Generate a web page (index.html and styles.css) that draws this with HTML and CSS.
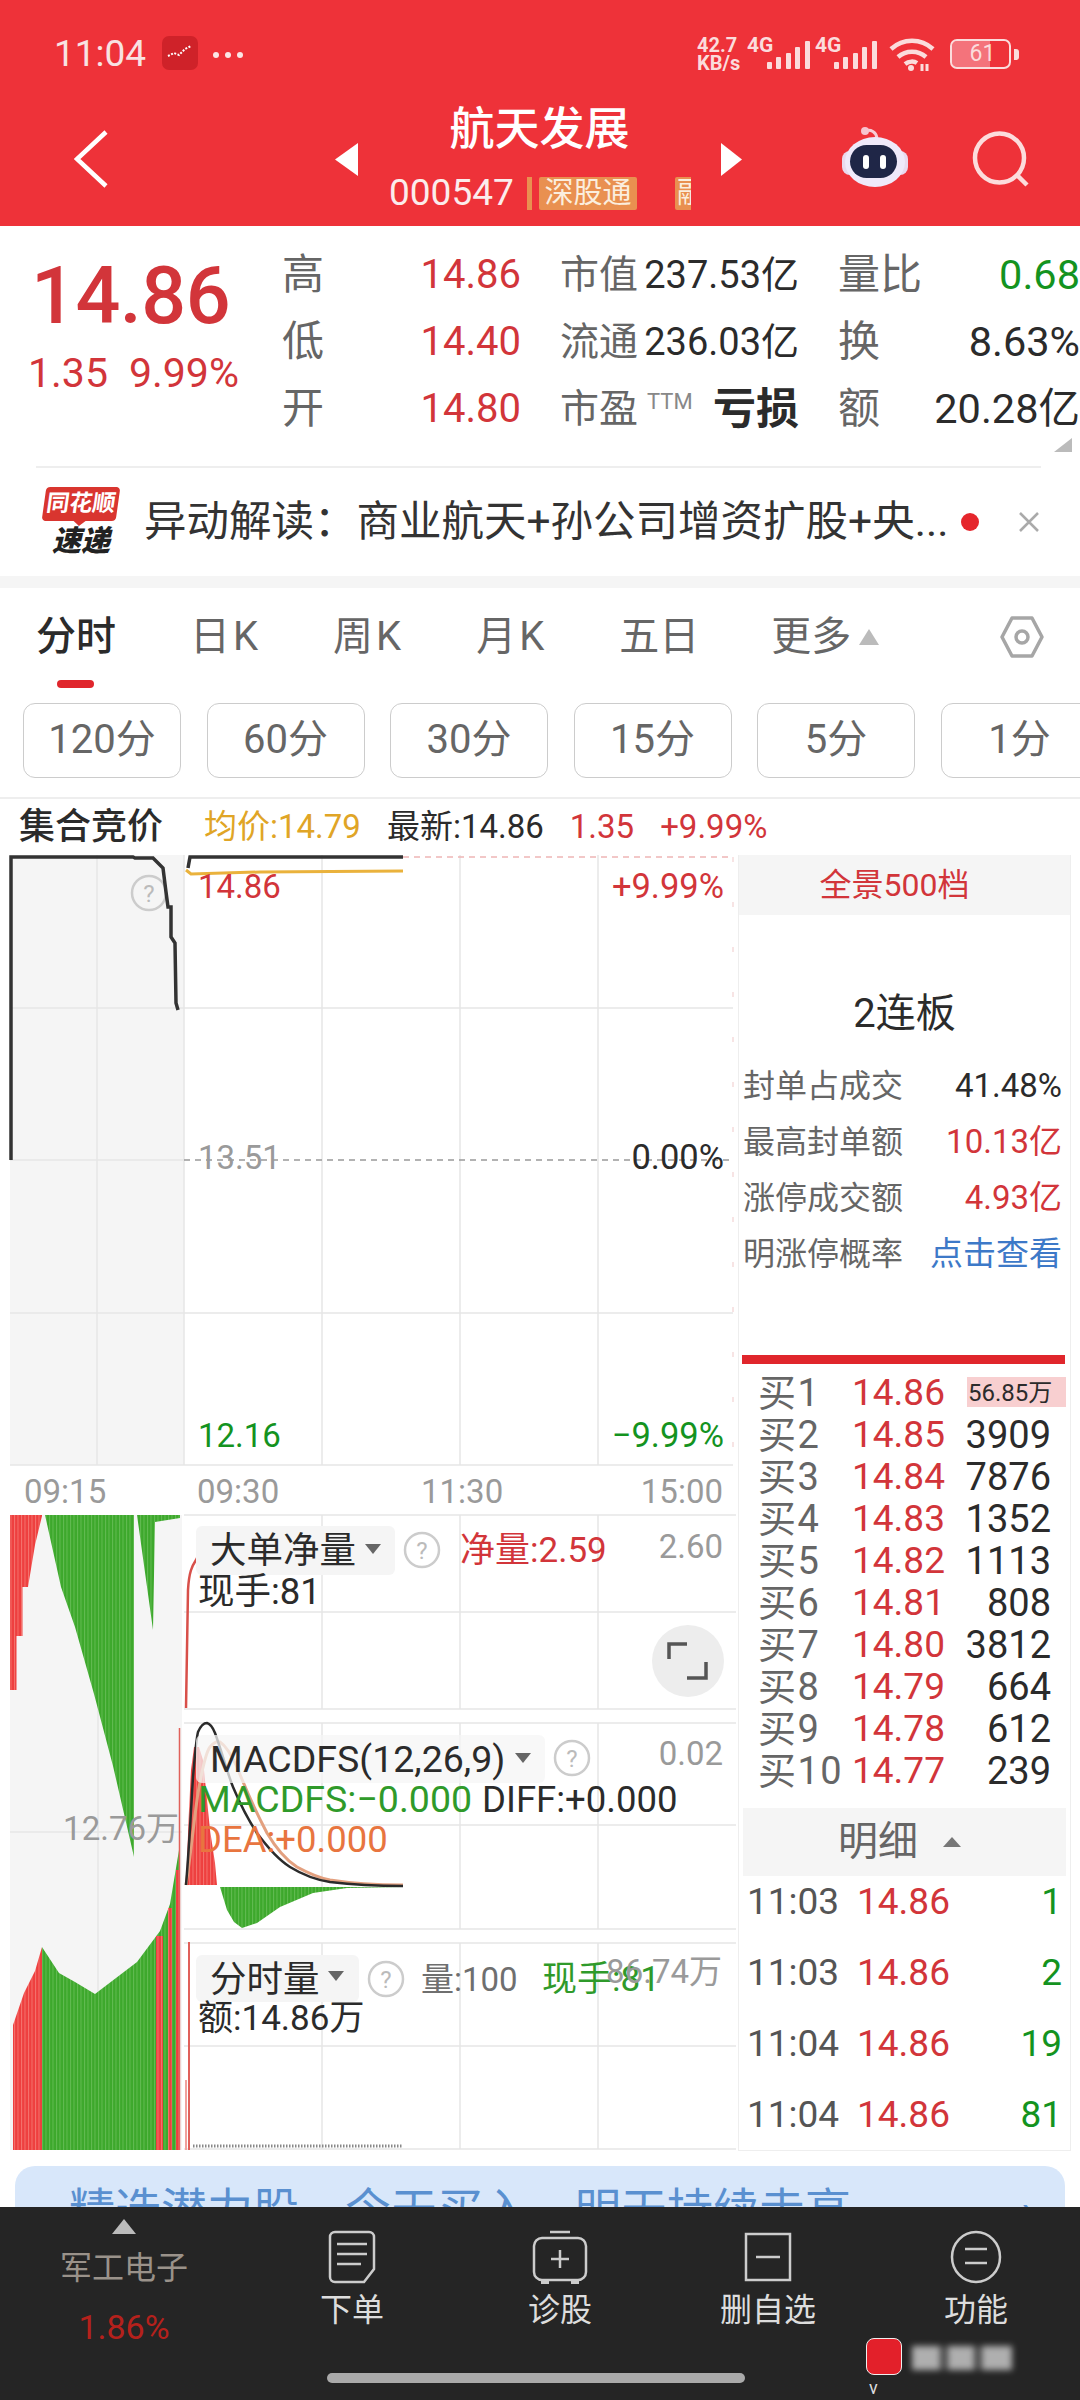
FILE: index.html
```html
<!DOCTYPE html>
<html lang="zh">
<head>
<meta charset="utf-8">
<title>航天发展</title>
<link rel="stylesheet" href="styles.css">
</head>
<body>
<div class="page">
  <header class="header">
    <div class="status">
      <span class="clock">11:04</span>
      <span class="app-dot"><svg viewBox="0 0 36 34" width="36" height="34"><path d="M6 20l6-3 5 2 6-6 6-3" fill="none" stroke="#fff" stroke-width="2" stroke-dasharray="2 1.500"/></svg></span>
      <span class="more-dots"><i></i><i></i><i></i></span>
      <span class="status-right">
        <span class="speed">42.7<br>KB/s</span>
        <svg class="sig" viewBox="0 -8 64 42" width="64" height="42"><text class="g4" x="0" y="14">4G</text><rect x="20" y="24" width="5" height="7" rx="1"/><rect x="29" y="19" width="5" height="12" rx="1"/><rect x="39" y="15" width="5" height="16" rx="1"/><rect x="48" y="9" width="5" height="22" rx="1"/><rect x="58" y="3" width="5" height="28" rx="1"/></svg>
        <svg class="sig sig2" viewBox="0 -8 63 42" width="63" height="42"><text class="g4" x="0" y="14">4G</text><rect x="19" y="24" width="5" height="7" rx="1"/><rect x="28" y="19" width="5" height="12" rx="1"/><rect x="38" y="15" width="5" height="16" rx="1"/><rect x="47" y="9" width="5" height="22" rx="1"/><rect x="57" y="3" width="5" height="28" rx="1"/></svg>
        <svg class="wifi" viewBox="0 0 46 34" width="46" height="34"><g fill="none" stroke="#fbdcdc" stroke-width="4.500"><path d="M2 12C14 1 32 1 44 12"/><path d="M9 20c8-7 20-7 28 0"/><path d="M16 27c4-3 9-3 12-1"/></g><circle cx="22" cy="31" r="3" fill="#fbdcdc"/><path d="M33 27v7M38 27v7" stroke="#fbdcdc" stroke-width="3"/></svg>
        <span class="battery"><span class="battery-body">61</span><i class="battery-cap"></i></span>
      </span>
    </div>
    <div class="nav">
      <svg class="back" viewBox="0 0 34 58" width="34" height="58"><path d="M32 2L3 29l29 27" fill="none" stroke="#fff" stroke-width="4.500"/></svg>
      <svg class="tri-l" viewBox="0 0 23 33" width="23" height="33"><path d="M23 0v33L0 16.500z" fill="#fff"/></svg>
      <div class="title-block">
        <div class="title">航天发展</div>
        <div class="code-row"><span class="code">000547</span><i class="code-sep"></i><span class="tag">深股通</span><span class="tag tag-cut">融</span></div>
      </div>
      <svg class="tri-r" viewBox="0 0 21 33" width="21" height="33"><path d="M0 0v33l21-16.500z" fill="#fff"/></svg>
      <svg class="robot" viewBox="0 0 66 64" width="66" height="64">
        <path d="M23 5c6-2 11 1 12 7" fill="none" stroke="#f7cdd6" stroke-width="3"/><circle cx="23" cy="5" r="4" fill="#f7c3cf"/>
        <rect x="0" y="25" width="66" height="24" rx="8" fill="#e9d9ee"/>
        <ellipse cx="33" cy="36" rx="30" ry="25" fill="#efe9fa"/>
        <rect x="8" y="19" width="47" height="33" rx="16.500" fill="#1f2647"/>
        <rect x="21" y="29" width="6" height="14" rx="3" fill="#fff"/><rect x="38" y="29" width="6" height="14" rx="3" fill="#fff"/>
      </svg>
      <svg class="search" viewBox="0 0 60 62" width="60" height="62"><circle cx="29.500" cy="32" r="24.500" fill="none" stroke="#fcdcdc" stroke-width="4.500"/><path d="M47 49l10 10" stroke="#fcdcdc" stroke-width="4.500" fill="none"/></svg>
    </div>
  </header>

  <section class="quote">
    <div class="quote-top">
      <div class="price">
        <div class="price-big">14.86</div>
        <div class="price-sub"><span>1.35</span><span>9.99%</span></div>
      </div>
      <div class="stats">
        <div class="stat"><span class="k">高</span><span class="v v1 red">14.86</span></div>
        <div class="stat"><span class="k k2">市值</span><span class="v dark">237.53亿</span></div>
        <div class="stat"><span class="k">量比</span><span class="v v3 green">0.68</span></div>
        <div class="stat"><span class="k">低</span><span class="v v1 red">14.40</span></div>
        <div class="stat"><span class="k k2">流通</span><span class="v dark">236.03亿</span></div>
        <div class="stat"><span class="k">换</span><span class="v v3 dark">8.63%</span></div>
        <div class="stat"><span class="k">开</span><span class="v v1 red">14.80</span></div>
        <div class="stat"><span class="k k2">市盈<small class="ttm">TTM</small></span><span class="v v4 dark">亏损</span></div>
        <div class="stat"><span class="k">额</span><span class="v v3 dark">20.28亿</span></div>
      </div>
      <i class="corner"></i>
    </div>
    <div class="news">
      <div class="logo"><span class="logo-top"><span class="logo-word">同花顺</span></span><span class="logo-bot">速递</span></div>
      <div class="news-text">异动解读：商业航天+孙公司增资扩股+央...</div>
      <i class="news-dot"></i>
      <svg class="news-x" viewBox="0 0 22 22" width="22" height="22"><path d="M2 2l18 18M20 2L2 20" stroke="#aaa" stroke-width="2.500"/></svg>
    </div>
  </section>
  <div class="strip"></div>

  <nav class="tabs">
    <span class="tab active">分时</span>
    <span class="tab tab-k">日K</span>
    <span class="tab tab-k">周K</span>
    <span class="tab tab-k">月K</span>
    <span class="tab">五日</span>
    <span class="tab tab-more">更多<i class="up"></i></span>
    <svg class="hex" viewBox="0 0 44 44" width="44" height="44"><path d="M12 3h20l10 19-10 19H12L2 22z" fill="none" stroke="#a6a6a6" stroke-width="3.500" stroke-linejoin="round"/><circle cx="22" cy="22" r="6" fill="none" stroke="#a6a6a6" stroke-width="3.500"/></svg>
  </nav>
  <div class="chips">
    <span class="chip">120分</span><span class="chip">60分</span><span class="chip">30分</span><span class="chip">15分</span><span class="chip">5分</span><span class="chip">1分</span>
  </div>
  <div class="info">
    <b class="info-title">集合竞价</b>
    <span class="gold">均价:14.79</span>
    <span class="dark">最新:14.86</span>
    <span class="red">1.35</span>
    <span class="red">+9.99%</span>
  </div>

  <main class="body">
    <div class="chart-col">
      <svg class="chart" viewBox="0 855 738 1300" width="738" height="1300">
        <defs>
          <pattern id="gs" patternUnits="userSpaceOnUse" width="3.500" height="8"><rect width="3.500" height="8" fill="#3da82c"/><rect width="1" height="8" fill="#62bb52"/></pattern>
          <pattern id="rs" patternUnits="userSpaceOnUse" width="3.500" height="8"><rect width="3.500" height="8" fill="#ee3f3f"/><rect width="1" height="8" fill="#f4736e"/></pattern>
        </defs>
        <!-- main pane -->
        <rect x="10" y="855" width="174" height="610" fill="#f5f5f5"/>
        <g class="grid">
          <path d="M10 1008H733M10 1313H733M10 1465H733M97 855V1465M184 855V1465M322 855V1465M460 855V1465M598 855V1465"/>
          <path d="M10 1160H184"/>
        </g>
        <path class="dash-gray" d="M184 1160H733"/>
        <path class="dash-red" d="M403 857H733"/>
        <path class="dash-faint" d="M733 857V1465"/>
        <circle class="help" cx="149" cy="893" r="17"/><text class="help-t" x="149" y="894">?</text>
        <path class="line-black" d="M11 1160V857H133L135 858H153L163 868 166 892 168 907 171 907 171 937 175 943 176 1003 178 1010"/>
        <path class="line-black" d="M188 868L190 857H403"/>
        <path class="line-gold" d="M186 870L191 874 260 872 403 871"/>
        <text class="t33 red" x="198" y="886">14.86</text>
        <text class="t34 red end" x="724" y="886">+9.99%</text>
        <text class="t33 gray" x="198" y="1157">13.51</text>
        <text class="t34 dark end" x="724" y="1157">0.00%</text>
        <text class="t33 green" x="198" y="1435">12.16</text>
        <text class="t34 green end" x="724" y="1435">−9.99%</text>
        <!-- time axis -->
        <text class="t33 gray" x="24" y="1491">09:15</text>
        <text class="t33 gray" x="197" y="1491">09:30</text>
        <text class="t33 gray" x="421" y="1491">11:30</text>
        <text class="t33 gray end" x="723" y="1491">15:00</text>
        <!-- left auction bars -->
        <rect x="10" y="1515" width="172" height="635" fill="#f5f5f5"/>
        <path class="grid" d="M10 1832H182M98 1515V2150"/>
        <path fill="url(#rs)" d="M10 1515V1690H16.500V1636H22.500V1587H28L35 1545 42 1516V1515z"/>
        <path fill="url(#gs)" d="M45 1515L61 1587 75 1627 94 1694 113 1766 134 1857V1515z"/>
        <path fill="url(#gs)" d="M137 1515L153 1630 155 1522 180 1518V1515z"/>
        <path fill="url(#rs)" d="M13 2150V2025L24 1993 35 1971 42 1947V2150z"/>
        <path fill="url(#gs)" d="M42 2150V1947L59 1973 75 1982 95 1994 137 1962 160 1931 170 1904 179 1850V2150z"/>
        <path fill="url(#rs)" d="M156 2150V1936H163V2150zM168 2150V1908H172V2150zM176 2150V1870H179V2150z"/>
        <path d="M179.500 1728V2150" stroke="#e0605a" stroke-width="1.500"/>
        <text class="t33 gray end" x="179" y="1828">12.76万</text>
        <!-- panels -->
        <g class="grid">
          <path d="M184 1515H736M184 1612H736M184 1709H736M322 1515V1709M460 1515V1709M598 1515V1709"/>
          <path d="M184 1723H736M184 1825H736M184 1929H736M322 1723V1929M460 1723V1929M598 1723V1929"/>
          <path d="M184 1943H736M184 2046H736M184 2149H736M322 1943V2149M460 1943V2149M598 1943V2149"/>
        </g>
        <!-- net volume -->
        <path class="line-red" d="M186 1708L188 1590C189 1572 192 1566 196 1560 202 1548 206 1540 216 1537 236 1534H260L274 1527H290L311 1522H340L349 1516H403"/>
        <rect class="chipbg" x="196" y="1526" width="199" height="49" rx="6"/>
        <text class="t36 dark" x="210" y="1550">大单净量</text>
        <path class="caret" d="M365 1544h16l-8 10z"/>
        <circle class="help" cx="422" cy="1550" r="17"/><text class="help-t" x="422" y="1551">?</text>
        <text class="t35 red" x="460" y="1550">净量:2.59</text>
        <text class="t33 gray end" x="723" y="1546">2.60</text>
        <text class="t36 dark" x="198" y="1591">现手:81</text>
        <circle cx="688" cy="1661" r="36" fill="#ededed"/>
        <path d="M687 1644H669V1659M687 1678H706V1662" fill="none" stroke="#555" stroke-width="3.500"/>
        <!-- macd -->
        <path fill="url(#rs)" d="M186 1885L189 1810 191 1770 194 1747 199 1747 203 1760 207 1800 210 1830 215 1863 217 1885z"/>
        <path fill="url(#gs)" d="M220 1887L227 1910 234 1922 242 1928 257 1923 280 1907 313 1893 347 1888 403 1887z"/>
        <path class="line-orange" d="M186 1885C190 1860 194 1820 198 1793 202 1770 206 1752 210 1747 214 1742 217 1741 220 1742 226 1746 232 1756 237 1767 246 1790 256 1812 267 1833 277 1850 286 1860 297 1867 308 1873 320 1878 330 1880 355 1884 380 1885 403 1885"/>
        <path class="line-black2" d="M186 1885C189 1850 191 1810 193 1777 195 1755 196 1740 198 1732 201 1725 204 1723 207 1723 211 1724 213 1728 215 1733 222 1752 227 1772 233 1787 241 1806 249 1821 257 1833 268 1848 279 1860 290 1867 303 1875 317 1880 330 1882 355 1885 380 1886 403 1886"/>
        <rect class="chipbg alpha" x="196" y="1735" width="349" height="48" rx="6"/>
        <text class="t37 dark" x="210" y="1759">MACDFS(12,26,9)</text>
        <path class="caret" d="M515 1753h16l-8 10z"/>
        <circle class="help" cx="572" cy="1758" r="17"/><text class="help-t" x="572" y="1759">?</text>
        <text class="t33 gray end" x="723" y="1753">0.02</text>
        <text class="t37 green2" x="198" y="1799">MACDFS:−0.000</text>
        <text class="t36 dark" x="482" y="1799">DIFF:+0.000</text>
        <text class="t36 orange" x="198" y="1839">DEA:+0.000</text>
        <!-- volume -->
        <path d="M189 1942V2150" stroke="#e0605a" stroke-width="2"/>
        <path d="M186 2080V2150" stroke="#f0a09c" stroke-width="2"/>
        <path d="M193 2146H403" stroke="#888" stroke-width="3" stroke-dasharray="1.500 1.500"/>
        <rect class="chipbg" x="196" y="1955" width="163" height="47" rx="6"/>
        <text class="t36 dark" x="210" y="1979">分时量</text>
        <path class="caret" d="M328 1971h16l-8 10z"/>
        <circle class="help" cx="386" cy="1979" r="17"/><text class="help-t" x="386" y="1980">?</text>
        <text class="t33 gray2" x="421" y="1979">量:100</text>
        <text class="t35 green2" x="542" y="1979">现手:81</text>
        <text class="t33 gray end" x="722" y="1971">86.74万</text>
        <text class="t35 dark" x="198" y="2018">额:14.86万</text>
      </svg>
    </div>
    <aside class="side">
      <div class="band-red">全景500档</div>
      <div class="limit">2连板</div>
      <dl class="limit-list">
        <div class="lrow"><dt>封单占成交</dt><dd class="dark">41.48%</dd></div>
        <div class="lrow"><dt>最高封单额</dt><dd class="red">10.13亿</dd></div>
        <div class="lrow"><dt>涨停成交额</dt><dd class="red">4.93亿</dd></div>
        <div class="lrow"><dt>明涨停概率</dt><dd class="blue">点击查看</dd></div>
      </dl>
      <div class="redbar"></div>
      <div class="book">
        <div class="brow"><span class="bk">买1</span><span class="red">14.86</span><span class="bq small">56.85万</span></div>
        <div class="brow"><span class="bk">买2</span><span class="red">14.85</span><span class="bq">3909</span></div>
        <div class="brow"><span class="bk">买3</span><span class="red">14.84</span><span class="bq">7876</span></div>
        <div class="brow"><span class="bk">买4</span><span class="red">14.83</span><span class="bq">1352</span></div>
        <div class="brow"><span class="bk">买5</span><span class="red">14.82</span><span class="bq">1113</span></div>
        <div class="brow"><span class="bk">买6</span><span class="red">14.81</span><span class="bq">808</span></div>
        <div class="brow"><span class="bk">买7</span><span class="red">14.80</span><span class="bq">3812</span></div>
        <div class="brow"><span class="bk">买8</span><span class="red">14.79</span><span class="bq">664</span></div>
        <div class="brow"><span class="bk">买9</span><span class="red">14.78</span><span class="bq">612</span></div>
        <div class="brow"><span class="bk">买10</span><span class="red">14.77</span><span class="bq">239</span></div>
      </div>
      <div class="band-detail">明细<i class="up up2"></i></div>
      <div class="ticks">
        <div class="trow"><span class="tt">11:03</span><span class="red">14.86</span><span class="tq">1</span></div>
        <div class="trow"><span class="tt">11:03</span><span class="red">14.86</span><span class="tq">2</span></div>
        <div class="trow"><span class="tt">11:04</span><span class="red">14.86</span><span class="tq">19</span></div>
        <div class="trow"><span class="tt">11:04</span><span class="red">14.86</span><span class="tq">81</span></div>
      </div>
    </aside>
  </main>
  <div class="promo"><span>精选潜力股，今天买入，明天持续走高</span><b>›</b></div>

  <footer class="bottom">
    <div class="b-first"><i class="b-tri"></i><span class="b-name">军工电子</span><span class="b-pct">1.86%</span></div>
    <div class="b-item">
      <svg viewBox="0 0 48 54" width="48" height="54"><path d="M7 2h34a5 5 0 0 1 5 5v32l-10 13H7a5 5 0 0 1-5-5V7a5 5 0 0 1 5-5z" fill="none" stroke="#ccc" stroke-width="2.500"/><path d="M9 14h30M9 24h30M9 34h24" stroke="#ccc" stroke-width="2.500"/></svg>
      <span>下单</span>
    </div>
    <div class="b-item">
      <svg viewBox="0 0 56 54" width="56" height="54"><path d="M18 2h20" stroke="#ccc" stroke-width="2.500"/><rect x="2" y="8" width="52" height="42" rx="8" fill="none" stroke="#ccc" stroke-width="2.500"/><path d="M28 20v18M19 29h18" stroke="#ccc" stroke-width="2.500"/><path d="M9 50h8v4H9zM39 50h8v4h-8z" fill="#ccc"/></svg>
      <span>诊股</span>
    </div>
    <div class="b-item">
      <svg viewBox="0 0 48 54" width="48" height="54"><rect x="2" y="4" width="44" height="46" fill="none" stroke="#ccc" stroke-width="2.500"/><path d="M12 27h24" stroke="#ccc" stroke-width="2.500"/></svg>
      <span>删自选</span>
    </div>
    <div class="b-item">
      <svg viewBox="0 0 52 54" width="52" height="54"><ellipse cx="26" cy="27" rx="24" ry="25" fill="none" stroke="#ccc" stroke-width="2.500"/><path d="M15 19h22M15 33h22" stroke="#ccc" stroke-width="2.500"/></svg>
      <span>功能</span>
    </div>
    <div class="home-pill"></div>
    <div class="mark"><i class="mark-icon"></i><i class="mark-blur"></i><span class="mark-v">v</span></div>
  </footer>
</div>
</body>
</html>
```

FILE: styles.css
```css
* { box-sizing: border-box; }
html, body { margin: 0; padding: 0; background: #fff; }
body { font-family: Roboto, "Noto Sans CJK SC", sans-serif; color: #333; }
i { display: block; font-style: normal; }
.page { width: 1080px; height: 2400px; overflow: hidden; display: flex; flex-direction: column; position: relative; }

.red { color: #d2353a; fill: #d2353a; }
.dark { color: #2b2b2b; fill: #2b2b2b; }
.green { color: #14931f; fill: #14931f; }
.green2 { fill: #2f9a2a; }
.gray { fill: #9a9a9a; }
.gray2 { fill: #6f6f6f; }
.orange { fill: #e8753f; }
.gold { color: #e0a526; }
.blue { color: #3d79c8; }

/* header */
.header { height: 226px; background: #ee3239; color: #fff; flex: none; }
.status { height: 100px; display: flex; align-items: flex-start; padding: 36px 0 0 54px; }
.clock { font-size: 37px; line-height: 36px; width: 108px; color: #f8e2e2; }
.app-dot { width: 36px; height: 34px; border-radius: 7px; background: #cf2229; display: block; }
.app-dot svg { display: block; }
.more-dots { display: flex; gap: 6px; margin: 16px 0 0 15px; }
.more-dots i { width: 6px; height: 6px; border-radius: 50%; background: #fbe6e6; }
.status-right { position: absolute; top: 36px; left: 697px; display: flex; align-items: flex-start; color: #fbdcdc; }
.speed { font-size: 20px; line-height: 18px; font-weight: 700; width: 50px; white-space: nowrap; }
.sig { display: block; margin-top: -6px; fill: #fbdcdc; }
.g4 { font-size: 21px; font-weight: 700; fill: #fbdcdc; font-family: Roboto, sans-serif; }
.sig2 { margin-left: 4px; }
.wifi { display: block; margin: 1px 0 0 11px; }
.battery { display: flex; align-items: center; margin: 3px 0 0 15px; }
.battery-body { width: 61px; height: 30px; border: 2.500px solid #fbdcdc; border-radius: 7px; background: linear-gradient(90deg, #f4737b 0 66%, transparent 66%); background-clip: padding-box; font-size: 23px; line-height: 25px; text-align: center; padding-left: 4px; }
.battery-cap { width: 5px; height: 11px; background: #fbdcdc; border-radius: 0 3px 3px 0; margin-left: 3px; }

.nav { display: flex; align-items: flex-start; padding-left: 74px; }
.back { flex: none; margin: 30px 227px 0 0; }
.tri-l, .tri-r { flex: none; margin-top: 43px; }
.title-block { width: 363px; flex: none; }
.title { font-size: 45px; line-height: 60px; font-weight: 500; text-align: center; }
.code-row { display: flex; align-items: center; height: 44px; margin: 11px 30px 0 31px; overflow: hidden; }
.code { font-size: 37px; line-height: 44px; width: 138px; flex: none; color: #fbecec; }
.code-sep { width: 5px; height: 33px; background: #e99050; flex: none; }
.tag { flex: none; width: 98px; height: 33px; margin-left: 7px; background: #e99050; color: #fbeede; font-size: 29px; line-height: 33px; text-align: center; border-radius: 2px; }
.tag-cut { margin-left: 38px; text-align: left; padding-left: 2px; }
.robot { flex: none; margin: 26px 0 0 100px; }
.search { flex: none; margin: 26px 0 0 62px; }

/* quote */
.quote { background: #fff; flex: none; }
.quote-top { display: flex; height: 240px; position: relative; }
.price { width: 282px; flex: none; padding: 25px 0 0 28px; }
.price-big { font-size: 79px; line-height: 90px; font-weight: 500; color: #d2353a; margin-left: 3px; letter-spacing: -.5px; }
.price-sub { display: flex; gap: 21px; font-size: 41px; line-height: 44px; margin-top: 10px; color: #d2353a; white-space: nowrap; }
.stats { flex: none; width: 798px; display: grid; grid-template-columns: 239px 239px 242px; column-gap: 39px; grid-auto-rows: 67px; padding-top: 15px; }
.stat { display: flex; justify-content: space-between; align-items: center; white-space: nowrap; }
.k { font-size: 42px; line-height: 50px; color: #666; position: relative; }
.k2 { font-size: 39px; }
.ttm { font-size: 22px; line-height: 24px; color: #888; position: absolute; left: 87px; top: 6px; }
.v { font-size: 38px; line-height: 50px; }
.v1 { font-size: 40px; }
.v3 { font-size: 41.500px; }
.v4 { font-size: 43px; font-weight: 700; }
.corner { position: absolute; right: 8px; top: 212px; width: 0; height: 0; border-left: 18px solid transparent; border-bottom: 14px solid #bbb; }

.news { height: 110px; margin: 0 39px 0 36px; border-top: 2px solid #eee; display: flex; align-items: center; position: relative; }
.logo { width: 82px; flex: none; margin-left: 4px; display: flex; flex-direction: column; align-items: center; }
.logo-top { width: 74px; height: 34px; background: #d9352f; border-radius: 4px; transform: skewX(-8deg); position: relative; display: block; text-align: center; }
.logo-top::after { content: ""; position: absolute; left: 32px; top: 34px; width: 0; height: 0; border-left: 6px solid transparent; border-right: 6px solid transparent; border-top: 5px solid #d9352f; }
.logo-word { color: #fff; font-size: 23px; line-height: 34px; font-weight: 700; }
.logo-bot { font-size: 29px; line-height: 32px; font-weight: 900; font-style: italic; color: #222; margin-top: 4px; }
.news-text { font-size: 42.500px; line-height: 50px; color: #333; margin-left: 22px; width: 804px; white-space: nowrap; flex: none; }
.news-dot { width: 18px; height: 18px; border-radius: 50%; background: #e5262c; margin-left: 13px; flex: none; }
.news-x { flex: none; margin-left: 39px; }
.strip { height: 12px; background: #f5f5f5; flex: none; }

/* tabs */
.tabs { height: 115px; flex: none; display: flex; align-items: flex-start; padding: 26px 0 0 36px; gap: 72px; position: relative; }
.tab { font-size: 40px; line-height: 46px; color: #666; position: relative; white-space: nowrap; }
.tab-k { letter-spacing: 3px; }
.tab.active { color: #2b2b2b; font-weight: 500; margin-right: 2px; }
.tab.active::after { content: ""; position: absolute; left: 21px; top: 66px; width: 37px; height: 8px; border-radius: 4px; background: #e0262c; }
.tab-more { display: flex; align-items: center; gap: 8px; }
.up { width: 0; height: 0; border-left: 10px solid transparent; border-right: 10px solid transparent; border-bottom: 16px solid #bbb; }
.hex { position: absolute; left: 1000px; top: 27px; }

.chips { height: 94px; flex: none; display: flex; gap: 25.500px; padding-left: 23px; white-space: nowrap; }
.chip { flex: none; width: 158px; height: 75px; border: 1.500px solid #ccc; border-radius: 12px; font-size: 40px; line-height: 72px; text-align: center; color: #666; }

.info { height: 58px; flex: none; border-top: 2px solid #eee; display: flex; align-items: center; padding-left: 19px; gap: 26px; font-size: 33px; line-height: 44px; white-space: nowrap; }
.info-title { font-size: 36px; font-weight: 500; color: #2b2b2b; margin-right: 15px; }

/* chart */
.body { display: flex; flex: none; height: 1298px; }
.chart-col { width: 738px; flex: none; }
.chart { display: block; }
.chart text { dominant-baseline: central; }
.grid, .grid path { stroke: #e6e6e6; stroke-width: 1.500; fill: none; }
.dash-gray { stroke: #999; stroke-width: 1.500; stroke-dasharray: 6 5; fill: none; }
.dash-red { stroke: #eeb5b5; stroke-width: 1.500; stroke-dasharray: 6 5; fill: none; }
.dash-faint { stroke: #f5dcdc; stroke-width: 1.500; stroke-dasharray: 5 40; fill: none; }
.line-black { stroke: #333; stroke-width: 3.500; fill: none; }
.line-black2 { stroke: #2b2b2b; stroke-width: 2.500; fill: none; }
.line-gold { stroke: #eab23c; stroke-width: 3; fill: none; }
.line-red { stroke: #d8504a; stroke-width: 2.500; fill: none; }
.line-orange { stroke: #e3a07f; stroke-width: 3; fill: none; }
.chipbg { fill: #f5f5f5; }
.chipbg.alpha { fill-opacity: .75; }
.caret { fill: #666; }
.help { fill: none; stroke: #ccc; stroke-width: 2.500; }
.help-t { font-size: 24px; fill: #bbb; text-anchor: middle; }
.t33 { font-size: 33px; }
.t34 { font-size: 34.500px; }
.t35 { font-size: 35px; }
.t36 { font-size: 36.500px; }
.t37 { font-size: 37.500px; }
.end { text-anchor: end; }

/* side panel */
.side { width: 333px; flex: none; margin-right: 9px; height: 1296px; border-left: 1.500px solid #eee; border-right: 1.500px solid #eee; border-bottom: 1.500px solid #eee; display: flex; flex-direction: column; }
.band-red { height: 60px; flex: none; background: #f5f5f5; color: #d2353a; font-size: 32px; line-height: 60px; text-align: center; padding-right: 20px; }
.limit { margin-top: 69px; height: 60px; flex: none; font-size: 40px; line-height: 60px; text-align: center; color: #2b2b2b; }
.limit-list { margin: 14px 0 0; padding: 0; flex: none; }
.lrow { display: flex; justify-content: space-between; align-items: center; height: 56px; padding: 0 8px 0 4px; line-height: 40px; }
.lrow dt { font-size: 32px; color: #666; }
.lrow dd { margin: 0; font-size: 33px; }
.redbar { height: 9px; margin: 73px 5px 0 3px; background: #e0262c; flex: none; }
.book { margin-top: 8px; flex: none; font-size: 37px; }
.brow { height: 42px; display: flex; align-items: center; padding-left: 19px; position: relative; line-height: 42px; }
.bk { width: 94px; color: #666; flex: none; font-size: 38px; letter-spacing: 1.500px; white-space: nowrap; }
.bq { position: absolute; right: 19px; color: #2b2b2b; font-size: 38px; }
.bq.small { font-size: 24px; right: 4px; width: 99px; height: 30px; line-height: 32px; top: 5px; background: #f8cfd0; padding-left: 1px; }
.band-detail { height: 68px; margin: 16px 4px 0 4px; flex: none; background: #f5f5f5; font-size: 40px; line-height: 68px; color: #666; display: flex; align-items: center; padding-left: 95px; gap: 25px; }
.up2 { border-left-width: 9px; border-right-width: 9px; border-bottom-width: 10px; border-bottom-color: #777; }
.ticks { display: flex; flex-direction: column; gap: 19px; font-size: 37px; flex: none; }
.trow { height: 52px; display: flex; align-items: center; padding: 0 8px 0 8px; line-height: 44px; }
.tt { width: 110px; color: #555; flex: none; }
.tq { margin-left: auto; color: #14931f; }

.promo { flex: none; height: 60px; margin: 13px 15px 0 15px; border-radius: 20px 20px 0 0; background: #d8e7fa; color: #5a90d0; font-size: 46px; line-height: 60px; padding: 14px 0 0 54px; white-space: nowrap; display: flex; justify-content: space-between; overflow: hidden; }
.promo b { font-weight: 400; margin-right: 30px; }

/* bottom */
.bottom { position: absolute; left: 0; right: 0; bottom: 0; height: 193px; background: #252525; display: grid; grid-template-columns: 248px repeat(4, 208px); align-items: start; }
.b-first { display: flex; flex-direction: column; align-items: center; padding-top: 12px; }
.b-tri { width: 0; height: 0; border-left: 12px solid transparent; border-right: 12px solid transparent; border-bottom: 15px solid #bbb; }
.b-name { font-size: 32px; line-height: 44px; color: #9a928a; margin-top: 12px; }
.b-pct { font-size: 34px; line-height: 44px; color: #b5211c; margin-top: 15px; }
.b-item { display: flex; flex-direction: column; align-items: center; padding-top: 23px; color: #ddd; font-size: 32px; line-height: 44px; }
.b-item svg { display: block; margin-bottom: 4px; }
.home-pill { position: absolute; left: 327px; top: 166px; width: 418px; height: 10px; border-radius: 5px; background: #aaa; }
.mark { position: absolute; left: 866px; top: 131px; width: 150px; height: 60px; }
.mark-icon { width: 36px; height: 37px; background: #e3202a; border: 1.500px solid #eee; border-radius: 8px; }
.mark-blur { position: absolute; left: 46px; top: 8px; width: 100px; height: 24px; background: linear-gradient(90deg, #ddd 0 28%, #555 28% 36%, #ddd 36% 62%, #555 62% 70%, #ddd 70% 100%); filter: blur(3px); opacity: .75; }
.mark-v { position: absolute; left: 3px; top: 40px; font-size: 18px; line-height: 20px; color: #ddd; }
```
